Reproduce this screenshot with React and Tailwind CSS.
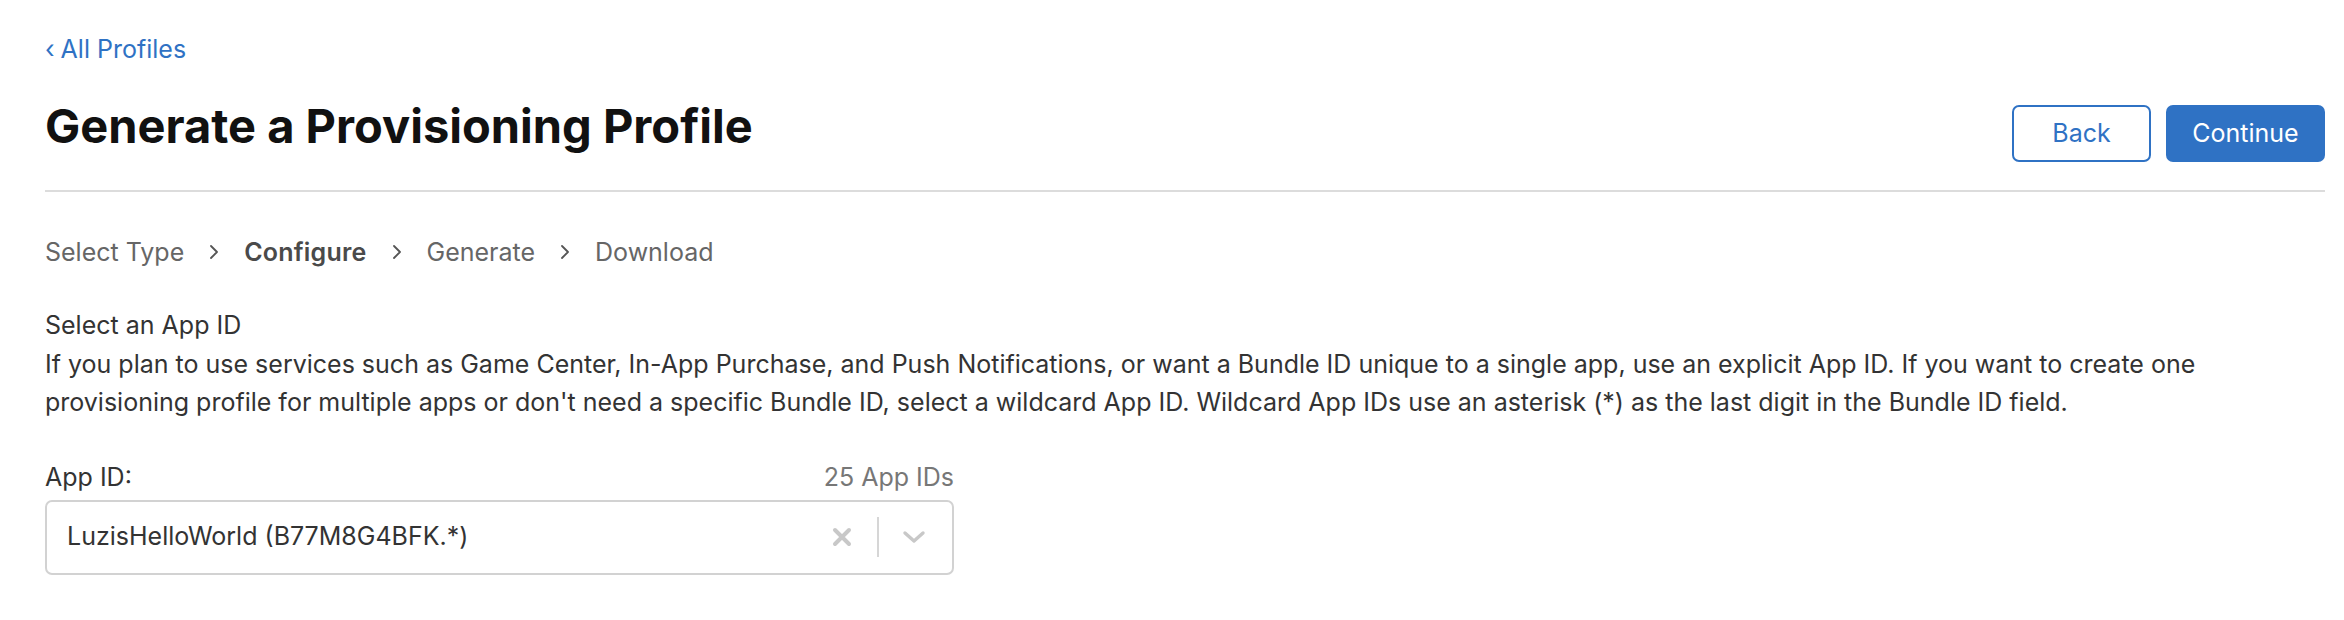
import React from "react";

const steps = [
  { label: "Select Type", active: false },
  { label: "Configure", active: true },
  { label: "Generate", active: false },
  { label: "Download", active: false },
];

const StepChevron = () => (
  <svg width="12" height="18" viewBox="0 0 12 18" className="mx-[24px]">
    <path d="M3 3 L9 9 L3 15" fill="none" stroke="#555" strokeWidth="1.8" strokeLinecap="round" strokeLinejoin="round" />
  </svg>
);

const App = () => {
  return (
    <div className="min-h-[620px] bg-white pl-[45px] text-[#333] font-['Inter','Liberation_Sans',sans-serif]">
      <div className="w-[2280px]">
        <div className="pt-[34px] text-[25px] leading-[30px] text-[#2f72c4]">
          <span className="mr-[6px]">‹</span>All Profiles
        </div>

        <div className="flex items-start justify-between pt-[34px] pb-[28px] border-b-2 border-[#dcdcdc]">
          <h1 className="text-[47px] leading-[56px] font-bold text-[#111]">
            Generate a Provisioning Profile
          </h1>
          <div className="flex gap-[15px] mt-[7px]">
            <button className="w-[139px] h-[57px] rounded-[7px] border-2 border-[#2f72c4] text-[25px] text-[#2f72c4] bg-white">
              Back
            </button>
            <button className="w-[159px] h-[57px] rounded-[7px] bg-[#2f72c4] text-[25px] text-white">
              Continue
            </button>
          </div>
        </div>

        <div className="flex items-center pt-[45px] text-[25px] leading-[30px] text-[#666]">
          {steps.map((s, i) => (
            <React.Fragment key={s.label}>
              {i > 0 && <StepChevron />}
              <span className={s.active ? "font-semibold tracking-[0.2px] text-[#4a4a4a]" : ""}>{s.label}</span>
            </React.Fragment>
          ))}
        </div>

        <div className="pt-[39px] text-[25px] leading-[38.5px] text-[#333]">
          <div>Select an App ID</div>
          <p>
            If you plan to use services such as Game Center, In-App Purchase, and Push Notifications, or want a Bundle ID unique to a single app, use an explicit App ID. If you want to create one provisioning profile for multiple apps or don't need a specific Bundle ID, select a wildcard App ID. Wildcard App IDs use an asterisk (*) as the last digit in the Bundle ID field.
          </p>
        </div>

        <div className="w-[909px] pt-[40px]">
          <div className="flex items-end justify-between text-[25px] leading-[30px] pb-[8px]">
            <span className="text-[#333]">App ID:</span>
            <span className="text-[#777]">25 App IDs</span>
          </div>
          <div className="flex items-center h-[75px] rounded-[7px] border-2 border-[#d2d2d2] pl-[20px] pr-[19px]">
            <span className="flex-1 text-[25px] text-[#333]">LuzisHelloWorld (B77M8G4BFK.*)</span>
            <svg width="22" height="22" viewBox="0 0 22 22" className="mr-[24px]">
              <path d="M4 4 L18 18 M18 4 L4 18" stroke="#c8c8c8" strokeWidth="4" strokeLinecap="round" />
            </svg>
            <div className="w-[2px] h-[40px] bg-[#d6d6d6]" />
            <svg width="26" height="16" viewBox="0 0 26 16" className="ml-[22px] mr-[6px]">
              <path d="M4 4 L13 12 L22 4" fill="none" stroke="#c8c8c8" strokeWidth="3.4" strokeLinecap="round" strokeLinejoin="round" />
            </svg>
          </div>
        </div>
      </div>
    </div>
  );
};

export default App;
